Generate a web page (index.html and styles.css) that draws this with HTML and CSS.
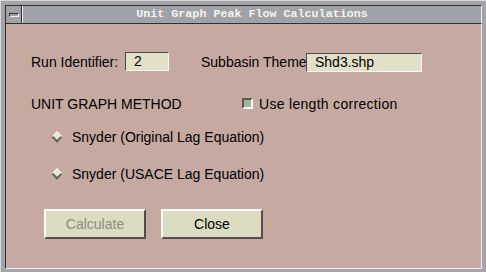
FILE: index.html
```html
<!DOCTYPE html>
<html lang="en">
<head>
  <meta charset="UTF-8">
  <title>Unit Graph Peak Flow Calculations</title>
  <link rel="stylesheet" href="styles.css">
</head>
<body>
  <div class="window">
    <div class="titlebar">
      <div class="menu-btn"><span></span></div>
      <div class="title">Unit Graph Peak Flow Calculations</div>
    </div>

    <div class="content">
      <div class="row row-ids">
        <span class="label label-run">Run Identifier:</span>
        <span class="field field-run">2</span>
        <span class="label label-theme">Subbasin Theme</span>
        <span class="field field-theme">Shd3.shp</span>
      </div>

      <div class="row row-method">
        <span class="label label-method">UNIT GRAPH METHOD</span>
        <span class="check"></span>
        <span class="label label-check">Use length correction</span>
      </div>

      <div class="row row-radio">
        <span class="diamond"></span>
        <span class="label">Snyder (Original Lag Equation)</span>
      </div>

      <div class="row row-radio">
        <span class="diamond"></span>
        <span class="label">Snyder (USACE Lag Equation)</span>
      </div>

      <div class="row row-buttons">
        <button class="btn btn-calc" disabled>Calculate</button>
        <button class="btn btn-close">Close</button>
      </div>
    </div>
  </div>
</body>
</html>
```

FILE: styles.css
```css
html, body {
  margin: 0;
  padding: 0;
}

body {
  width: 486px;
  height: 272px;
  overflow: hidden;
  background: #a2a4aa;
  font-family: "Liberation Sans", Arial, sans-serif;
  font-size: 14px;
  color: #000;
}

.window {
  box-sizing: border-box;
  width: 486px;
  height: 272px;
  border-left: 1px solid #d8d8d8;
  border-top: 1px solid #d8d8d8;
  padding: 4px;
  background: #a2a4aa;
}

.titlebar {
  display: flex;
  height: 17px;
  border: 1px solid #303030;
  border-right-color: #f0f0f0;
  background: #9fa2a8;
}

.menu-btn {
  width: 15px;
  border-right: 1px solid #303030;
  display: flex;
  align-items: center;
  justify-content: center;
}

.menu-btn span {
  width: 8px;
  height: 2px;
  border: 1px solid #303030;
  border-bottom-color: #f0f0f0;
  border-right-color: #f0f0f0;
}

.title {
  flex: 1;
  border-left: 1px solid #f0f0f0;
  text-align: center;
  font-family: "Liberation Mono", "Courier New", monospace;
  font-weight: bold;
  font-size: 11.7px;
  line-height: 17px;
  color: #f4f4f4;
}

.content {
  box-sizing: border-box;
  height: 245px;
  background: #c6aaa2;
  border-left: 1px solid #303030;
  border-bottom: 1px solid #f0f0f0;
  border-right: 1px solid #f0f0f0;
  padding: 28px 0 0 25px;
}

.row {
  display: flex;
  align-items: center;
  height: 19px;
}

.label {
  white-space: nowrap;
}

.label-run {
  width: 94px;
}

.field {
  box-sizing: border-box;
  height: 19px;
  line-height: 17px;
  background: #e2e0c8;
  border: 1px solid #4a4a4a;
  border-bottom-color: #f8f8f8;
  border-right-color: #f8f8f8;
  padding-left: 8px;
}

.field-run {
  width: 44px;
}

.label-theme {
  width: 105px;
  margin-left: 32px;
  overflow: hidden;
}

.field-theme {
  width: 116px;
  margin-top: 2px;
}

.row-method {
  margin-top: 23px;
}

.label-method {
  width: 211px;
}

.check {
  box-sizing: border-box;
  width: 11px;
  height: 11px;
  margin-right: 6px;
  background: #a6b2a0;
  border: 2px solid #585858;
  border-bottom-color: #fafafa;
  border-right-color: #fafafa;
}

.label-check {
  letter-spacing: 0.3px;
}

.row-radio {
  margin-top: 14px;
  padding-left: 22px;
}

.row-radio + .row-radio {
  margin-top: 18px;
}

.diamond {
  box-sizing: border-box;
  width: 8px;
  height: 8px;
  margin: 0 11px 0 0;
  transform: rotate(45deg);
  background: #e8e4c8;
  border: 1px solid #fafafa;
  border-bottom: 2px solid #606060;
  border-right: 2px solid #606060;
}

.row-buttons {
  margin-top: 26px;
  height: 30px;
  padding-left: 13px;
  gap: 15px;
}

.btn {
  box-sizing: border-box;
  width: 102px;
  height: 30px;
  margin: 0;
  padding: 0;
  font-family: "Liberation Sans", Arial, sans-serif;
  font-size: 14px;
  color: #000;
  background: #dcdcc2;
  border: 2px solid #fafafa;
  border-bottom-color: #505050;
  border-right-color: #505050;
}

.btn-calc {
  color: #8c8c84;
}
```
